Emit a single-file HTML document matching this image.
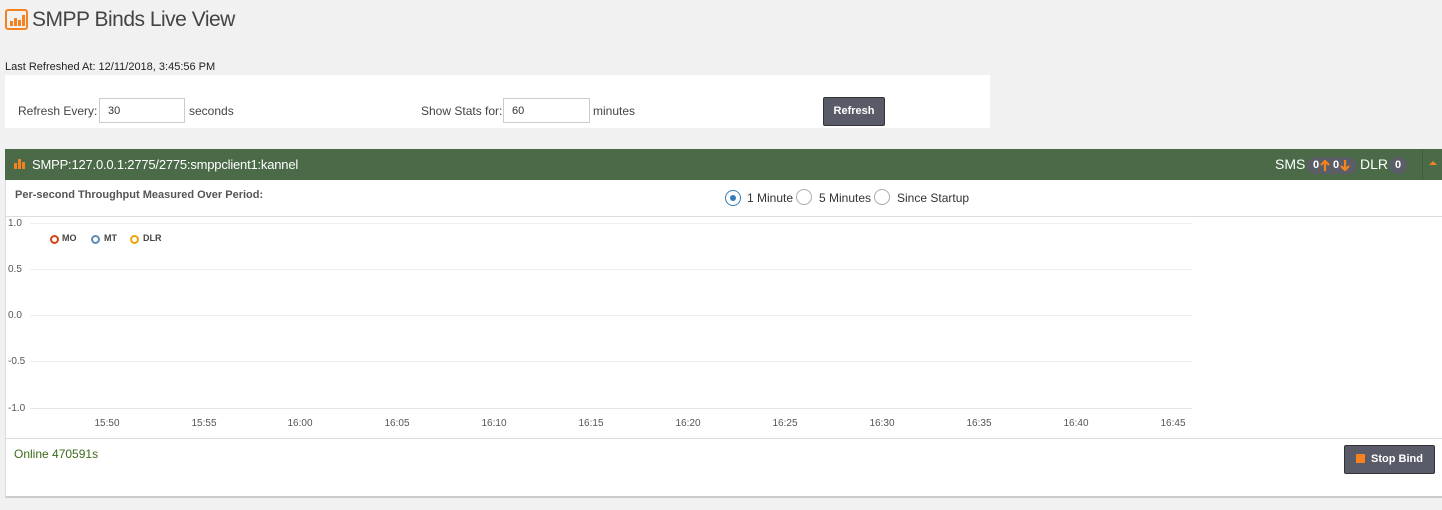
<!DOCTYPE html>
<html><head><meta charset="utf-8"><style>
body{margin:0;width:1442px;height:510px;background:#f1f1f1;font-family:"Liberation Sans",sans-serif;position:relative;overflow:hidden;color:#333}
.a{position:absolute}
.box{position:absolute;height:25px;border:1px solid #ccc;background:#fff;font-size:11px;line-height:25px;padding-left:8px;box-sizing:border-box}
.btn{position:absolute;background:#5a5b68;border:1px solid #333;border-radius:2px;color:#fff;font-weight:bold;font-size:11px;text-align:center;box-sizing:border-box}
.badge{position:absolute;top:157px;background:#5b5e66;border-radius:9px;font-size:11px;font-weight:bold;height:17px;line-height:17px;color:#fff}
.radio{position:absolute;width:16px;height:16px;border:1px solid #aaa;border-radius:50%;box-sizing:border-box;background:#fff}
.g{position:absolute;left:30px;width:1162px;height:1px;background:#eee}
.yl{position:absolute;left:8px;font-size:10px;color:#555}
.xl{position:absolute;top:418px;font-size:10px;color:#555;width:40px;text-align:center}
.lg{position:absolute;top:235px;width:5px;height:5px;border:2px solid;border-radius:50%}
.lt{position:absolute;top:233px;font-size:9px;font-weight:bold;color:#444}
</style></head><body>
<svg class="a" style="left:5px;top:9px" width="23" height="21"><rect x="1" y="1" width="21" height="19" rx="2" fill="none" stroke="#f5821f" stroke-width="2"/><rect x="5" y="12" width="3" height="5" fill="#f5821f"/><rect x="9" y="9" width="3" height="8" fill="#f5821f"/><rect x="13" y="11" width="3" height="6" fill="#f5821f"/><rect x="17" y="6" width="3" height="11" fill="#f5821f"/></svg>
<div class="a" style="left:32px;top:8px;font-size:21px;color:#444;letter-spacing:-0.5px">SMPP Binds Live View</div>
<div class="a" style="left:5px;top:61px;font-size:11px;color:#222">Last Refreshed At: 12/11/2018, 3:45:56 PM</div>
<div class="a" style="left:5px;top:75px;width:985px;height:53px;background:#fff"></div>
<div class="a" style="left:18px;top:104px;font-size:12px;color:#444">Refresh Every:</div>
<div class="box" style="left:99px;top:98px;width:86px">30</div>
<div class="a" style="left:189px;top:104px;font-size:12px;color:#444">seconds</div>
<div class="a" style="left:421px;top:104px;font-size:12px;color:#444">Show Stats for:</div>
<div class="box" style="left:503px;top:98px;width:87px">60</div>
<div class="a" style="left:593px;top:104px;font-size:12px;color:#444">minutes</div>
<div class="btn" style="left:823px;top:97px;width:62px;height:29px;line-height:27px">Refresh</div>
<div class="a" style="left:5px;top:149px;width:1437px;height:31px;background:#4a6a48"></div>
<svg class="a" style="left:14px;top:157px" width="13" height="12"><rect x="0" y="6" width="3" height="6" fill="#f5821f"/><rect x="4" y="2" width="3" height="10" fill="#f5821f"/><rect x="8" y="5" width="3" height="7" fill="#f5821f"/></svg>
<div class="a" style="left:32px;top:157px;font-size:13px;color:#fff;letter-spacing:-0.2px">SMPP:127.0.0.1:2775/2775:smppclient1:kannel</div>
<div class="a" style="left:1275px;top:156px;font-size:14px;color:#fff">SMS</div>
<div class="badge" style="left:1307px;width:50px">
 <span class="a" style="left:6px">0</span>
 <svg class="a" style="left:13px;top:3px" width="10" height="11"><path d="M5 1V11M1 5L5 1L9 5" stroke="#f5821f" stroke-width="2.2" fill="none"/></svg>
 <span class="a" style="left:26px">0</span>
 <svg class="a" style="left:33px;top:3px" width="10" height="11"><path d="M5 0V10M1 6L5 10L9 6" stroke="#f5821f" stroke-width="2.2" fill="none"/></svg>
</div>
<div class="a" style="left:1360px;top:156px;font-size:14px;color:#fff">DLR</div>
<div class="badge" style="left:1389px;width:18px;text-align:center">0</div>
<div class="a" style="left:1422px;top:149px;width:1px;height:31px;background:#3f5c3d"></div>
<div class="a" style="left:1429px;top:161px;width:0;height:0;border-left:4px solid transparent;border-right:4px solid transparent;border-bottom:4px solid #f5821f"></div>
<div class="a" style="left:5px;top:180px;width:1436px;height:316px;background:#fff;border:1px solid #ddd;border-top:0;border-bottom:2px solid #ccc"></div>
<div class="a" style="left:15px;top:189px;font-size:11px;font-weight:bold;color:#555">Per-second Throughput Measured Over Period:</div>
<div class="radio" style="left:725px;top:190px;border-color:#337ab7"><div class="a" style="left:4px;top:4px;width:6px;height:6px;border-radius:50%;background:#337ab7"></div></div>
<div class="a" style="left:747px;top:191px;font-size:12px">1 Minute</div>
<div class="radio" style="left:796px;top:189px"></div>
<div class="a" style="left:819px;top:191px;font-size:12px">5 Minutes</div>
<div class="radio" style="left:874px;top:189px"></div>
<div class="a" style="left:897px;top:191px;font-size:12px">Since Startup</div>
<div class="a" style="left:6px;top:216px;width:1436px;height:1px;background:#ddd"></div>
<div class="g" style="top:223px"></div><div class="g" style="top:269px"></div><div class="g" style="top:315px"></div><div class="g" style="top:361px"></div><div class="g" style="top:408px;background:#e4e4e4"></div>
<div class="yl" style="top:218px">1.0</div><div class="yl" style="top:264px">0.5</div><div class="yl" style="top:310px">0.0</div><div class="yl" style="top:356px">-0.5</div><div class="yl" style="top:403px">-1.0</div>
<div class="lg" style="left:50px;border-color:#d84315"></div><div class="lt" style="left:62px">MO</div>
<div class="lg" style="left:91px;border-color:#5b8db8"></div><div class="lt" style="left:104px">MT</div>
<div class="lg" style="left:130px;border-color:#f0a30a"></div><div class="lt" style="left:143px">DLR</div>
<div class="xl" style="left:87px">15:50</div><div class="xl" style="left:184px">15:55</div><div class="xl" style="left:280px">16:00</div><div class="xl" style="left:377px">16:05</div><div class="xl" style="left:474px">16:10</div><div class="xl" style="left:571px">16:15</div><div class="xl" style="left:668px">16:20</div><div class="xl" style="left:765px">16:25</div><div class="xl" style="left:862px">16:30</div><div class="xl" style="left:959px">16:35</div><div class="xl" style="left:1056px">16:40</div><div class="xl" style="left:1153px">16:45</div>
<div class="a" style="left:6px;top:438px;width:1436px;height:1px;background:#ddd"></div>
<div class="a" style="left:14px;top:447px;font-size:12px;color:#3c6a1a">Online 470591s</div>
<div class="btn" style="left:1344px;top:445px;width:91px;height:29px;line-height:27px"><span style="display:inline-block;width:9px;height:9px;background:#f5821f;margin-right:6px;vertical-align:-1px"></span>Stop Bind</div>
</body></html>
